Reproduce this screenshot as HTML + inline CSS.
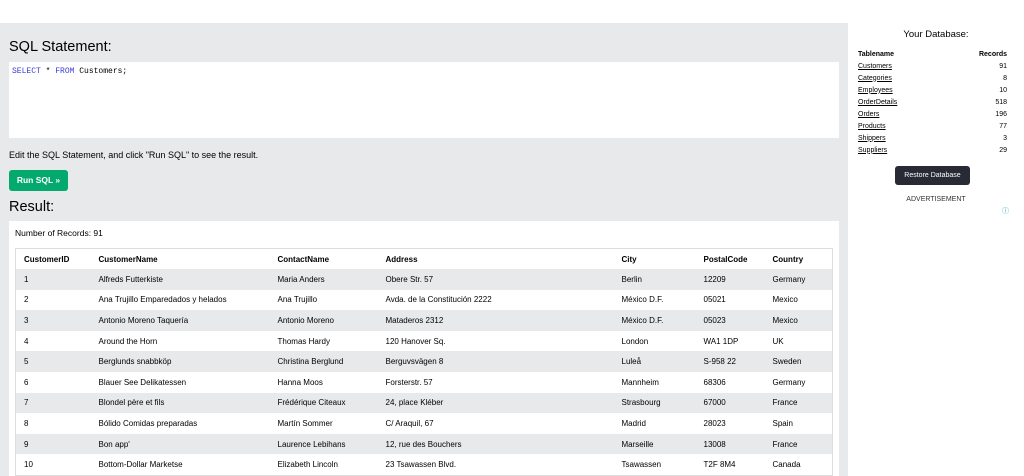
<!DOCTYPE html>
<html style="overflow:hidden;height:476px"><head><style>
*{margin:0;padding:0;box-sizing:border-box}
body{width:1024px;height:476px;overflow:hidden;background:#fff;font-family:"Liberation Sans",sans-serif;position:relative;color:#000}
#main{position:absolute;left:0;top:23px;width:848px;height:453px;background:#e7e9eb;overflow:hidden}
h2{position:absolute;font-weight:normal;font-size:14.5px;color:#000}
#code{position:absolute;left:9px;top:39px;width:830px;height:76px;background:#fff;font-family:"Liberation Mono",monospace;font-size:8px;padding:5px 3px}
.kw{color:#3b3bd6}
#edit{position:absolute;left:9px;top:127px;font-size:9px}
#run{position:absolute;left:9px;top:147px;width:59px;height:21px;background:#04aa6d;border-radius:3px;color:#fff;font-size:8.5px;font-weight:bold;text-align:center;line-height:21px}
#res{position:absolute;left:9px;top:198px;width:830px;height:260px;background:#fff}
#nr{position:absolute;left:6px;top:7px;font-size:8.5px}
table{position:absolute;left:6px;top:27px;width:818px;border-collapse:collapse;border:1px solid #ddd;font-size:8px}
td,th{height:20.6px;text-align:left;padding:0 0 0 8px;white-space:nowrap}
th{font-weight:bold}
tr:nth-child(even){background:#e7e9eb}
#side{position:absolute;left:848px;top:23px;width:176px}
#side .t{position:absolute;left:0;width:176px;text-align:center;top:6px;font-size:9.5px}
#db{position:absolute;left:10px;top:25px;width:149px;font-size:7px;border-collapse:collapse;border:none}
#db td,#db th{height:12px;padding:0}
#db tr{background:none}
#db td:last-child,#db th:last-child{text-align:right}
#db a{color:#000;text-decoration:underline}
#rest{position:absolute;left:47px;top:143px;width:75px;height:19px;background:#282a35;color:#fff;border-radius:3px;font-size:7px;text-align:center;line-height:19px}
#adv{position:absolute;left:0;width:176px;text-align:center;top:173px;font-size:7px;color:#333}
#i{position:absolute;left:154px;top:183px;font-size:7px;color:#1a9ed9}
</style></head><body>
<div id="main">
<h2 style="left:9px;top:16px">SQL Statement:</h2>
<div id="code"><span class="kw">SELECT</span> * <span class="kw">FROM</span> Customers;</div>
<div id="edit">Edit the SQL Statement, and click "Run SQL" to see the result.</div>
<div id="run">Run SQL »</div>
<h2 style="left:9px;top:176px">Result:</h2>
<div id="res"><div id="nr">Number of Records: 91</div>
<table>
<colgroup><col style="width:75px"><col style="width:179px"><col style="width:108px"><col style="width:236px"><col style="width:82px"><col style="width:69px"><col></colgroup>
<tr><th>CustomerID</th><th>CustomerName</th><th>ContactName</th><th>Address</th><th>City</th><th>PostalCode</th><th>Country</th></tr>
<tr><td>1</td><td>Alfreds Futterkiste</td><td>Maria Anders</td><td>Obere Str. 57</td><td>Berlin</td><td>12209</td><td>Germany</td></tr>
<tr><td>2</td><td>Ana Trujillo Emparedados y helados</td><td>Ana Trujillo</td><td>Avda. de la Constitución 2222</td><td>México D.F.</td><td>05021</td><td>Mexico</td></tr>
<tr><td>3</td><td>Antonio Moreno Taquería</td><td>Antonio Moreno</td><td>Mataderos 2312</td><td>México D.F.</td><td>05023</td><td>Mexico</td></tr>
<tr><td>4</td><td>Around the Horn</td><td>Thomas Hardy</td><td>120 Hanover Sq.</td><td>London</td><td>WA1 1DP</td><td>UK</td></tr>
<tr><td>5</td><td>Berglunds snabbköp</td><td>Christina Berglund</td><td>Berguvsvägen 8</td><td>Luleå</td><td>S-958 22</td><td>Sweden</td></tr>
<tr><td>6</td><td>Blauer See Delikatessen</td><td>Hanna Moos</td><td>Forsterstr. 57</td><td>Mannheim</td><td>68306</td><td>Germany</td></tr>
<tr><td>7</td><td>Blondel père et fils</td><td>Frédérique Citeaux</td><td>24, place Kléber</td><td>Strasbourg</td><td>67000</td><td>France</td></tr>
<tr><td>8</td><td>Bólido Comidas preparadas</td><td>Martín Sommer</td><td>C/ Araquil, 67</td><td>Madrid</td><td>28023</td><td>Spain</td></tr>
<tr><td>9</td><td>Bon app'</td><td>Laurence Lebihans</td><td>12, rue des Bouchers</td><td>Marseille</td><td>13008</td><td>France</td></tr>
<tr><td>10</td><td>Bottom-Dollar Marketse</td><td>Elizabeth Lincoln</td><td>23 Tsawassen Blvd.</td><td>Tsawassen</td><td>T2F 8M4</td><td>Canada</td></tr>
</table></div>
</div>
<div id="side">
<div class="t">Your Database:</div>
<table id="db">
<tr><th>Tablename</th><th>Records</th></tr>
<tr><td><a>Customers</a></td><td>91</td></tr>
<tr><td><a>Categories</a></td><td>8</td></tr>
<tr><td><a>Employees</a></td><td>10</td></tr>
<tr><td><a>OrderDetails</a></td><td>518</td></tr>
<tr><td><a>Orders</a></td><td>196</td></tr>
<tr><td><a>Products</a></td><td>77</td></tr>
<tr><td><a>Shippers</a></td><td>3</td></tr>
<tr><td><a>Suppliers</a></td><td>29</td></tr>
</table>
<div id="rest">Restore Database</div>
<div id="adv">ADVERTISEMENT</div>
<div id="i">ⓘ</div>
</div>
</body></html>
